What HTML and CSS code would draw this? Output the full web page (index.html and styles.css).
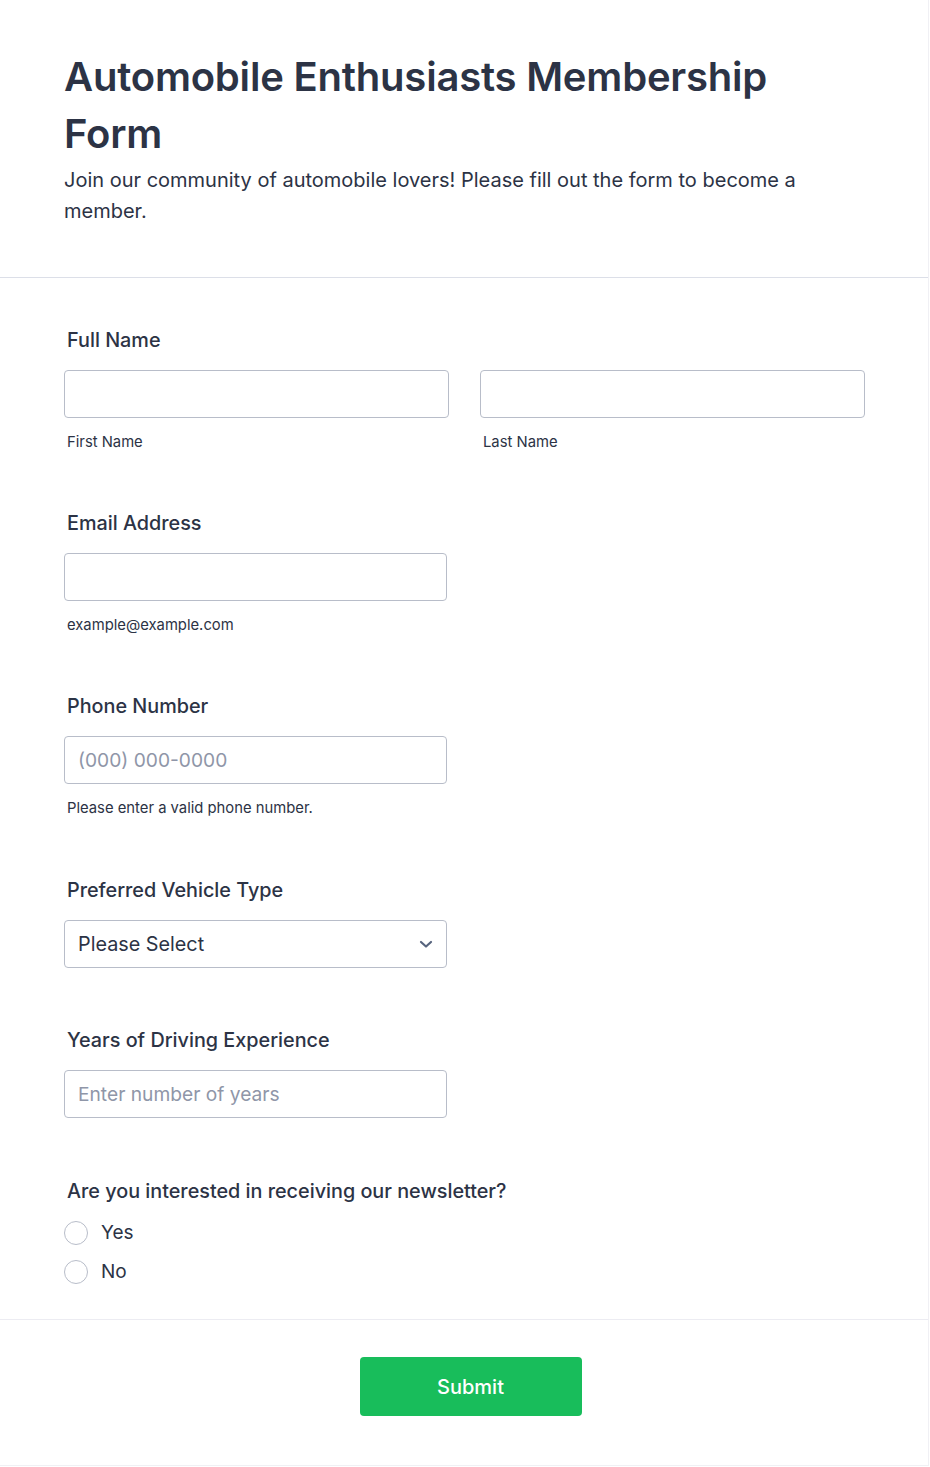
FILE: index.html
```html
<!DOCTYPE html>
<html lang="en">
<head>
<meta charset="utf-8">
<title>Automobile Enthusiasts Membership Form</title>
<link rel="stylesheet" href="styles.css">
</head>
<body>
<div class="card">
  <header class="header">
    <h1 class="title">Automobile Enthusiasts Membership Form</h1>
    <p class="desc">Join our community of automobile lovers! Please fill out the form to become a member.</p>
  </header>
  <form class="form">
    <div class="field">
      <div class="label">Full Name</div>
      <div class="name-grid">
        <div class="col">
          <input class="input" type="text">
          <div class="sublabel">First Name</div>
        </div>
        <div class="col">
          <input class="input" type="text">
          <div class="sublabel">Last Name</div>
        </div>
      </div>
    </div>
    <div class="field">
      <div class="label">Email Address</div>
      <input class="input half" type="email">
      <div class="sublabel">example@example.com</div>
    </div>
    <div class="field wide-gap">
      <div class="label">Phone Number</div>
      <input class="input half" type="tel" placeholder="(000) 000-0000">
      <div class="sublabel">Please enter a valid phone number.</div>
    </div>
    <div class="field">
      <div class="label">Preferred Vehicle Type</div>
      <div class="select half">
        <span>Please Select</span>
        <svg class="chev" width="14" height="9" viewBox="0 0 14 9"><path d="M2 2 L7 6.5 L12 2" fill="none" stroke="#57647e" stroke-width="2.2" stroke-linecap="round" stroke-linejoin="round"/></svg>
      </div>
    </div>
    <div class="field wide-gap">
      <div class="label">Years of Driving Experience</div>
      <input class="input half" type="text" placeholder="Enter number of years">
    </div>
    <div class="field last">
      <div class="label">Are you interested in receiving our newsletter?</div>
      <div class="radios">
        <label class="radio"><span class="circle"></span><span>Yes</span></label>
        <label class="radio"><span class="circle"></span><span>No</span></label>
      </div>
    </div>
  </form>
  <div class="footer">
    <button class="submit" type="button">Submit</button>
  </div>
</div>
</body>
</html>
```
FILE: styles.css
```css
* { box-sizing: border-box; }
html, body { margin: 0; padding: 0; background: #ffffff; }
body { font-family: Inter, "Noto Sans", sans-serif; color: #2c3345; }
.card {
  width: 929px;
  min-height: 1466px;
  border-right: 1px solid #f0f0f4;
  border-bottom: 1px solid #f0f0f4;
  background: #fff;
}
.header {
  padding: 48px 64px 50px;
  border-bottom: 1px solid #dcdfe8;
}
.title {
  margin: 0;
  font-size: 40px;
  line-height: 57px;
  font-weight: 600;
  color: #2c3345;
  letter-spacing: -0.2px;
}
.desc {
  margin: 3px 0 0;
  font-size: 20px;
  line-height: 31px;
  font-weight: 400;
  color: #2c3345;
  max-width: 760px;
}
.form {
  padding: 51px 64px 35px;
  border-bottom: 1px solid #ececf2;
}
.field { margin-bottom: 61px; }
.field.wide-gap { margin-bottom: 62px; }
.field.last { margin-bottom: 0; }
.label {
  font-size: 19.8px;
  line-height: 22px;
  font-weight: 500;
  padding-left: 3px;
  margin-bottom: 19px;
  color: #2c3345;
}
.name-grid {
  display: grid;
  grid-template-columns: 385px 385px;
  column-gap: 31px;
}
.input {
  display: block;
  width: 100%;
  height: 48px;
  border: 1px solid #b8bdc9;
  border-radius: 4px;
  padding: 0 13px;
  font-family: Inter, sans-serif;
  font-size: 19.2px;
  color: #2c3345;
  background: #fff;
  outline: none;
}
.input::placeholder { color: #8f96a8; }
.half { width: 383px; }
.sublabel {
  margin-top: 15px;
  font-size: 14.8px;
  line-height: 18px;
  padding-left: 3px;
  color: #2c3345;
}
.select {
  height: 48px;
  border: 1px solid #b8bdc9;
  border-radius: 4px;
  padding: 0 13px 0 13px;
  display: flex;
  align-items: center;
  justify-content: space-between;
  font-size: 19.8px;
  color: #2c3345;
}
.radios {
  display: flex;
  flex-direction: column;
  gap: 15px;
  margin-top: 4px;
}
.radio {
  display: flex;
  align-items: center;
  gap: 13px;
  font-size: 19px;
  line-height: 24px;
  color: #2c3345;
}
.circle {
  width: 24px;
  height: 24px;
  border: 1px solid #b8bdc9;
  border-radius: 50%;
  background: #fff;
}
.footer {
  display: flex;
  justify-content: center;
  padding: 37px 0 48px 13px;
}
.submit {
  width: 222px;
  height: 59px;
  background: #18bd5b;
  border: none;
  border-radius: 4px;
  color: #fff;
  font-family: Inter, sans-serif;
  font-size: 20px;
  font-weight: 500;
}
```
